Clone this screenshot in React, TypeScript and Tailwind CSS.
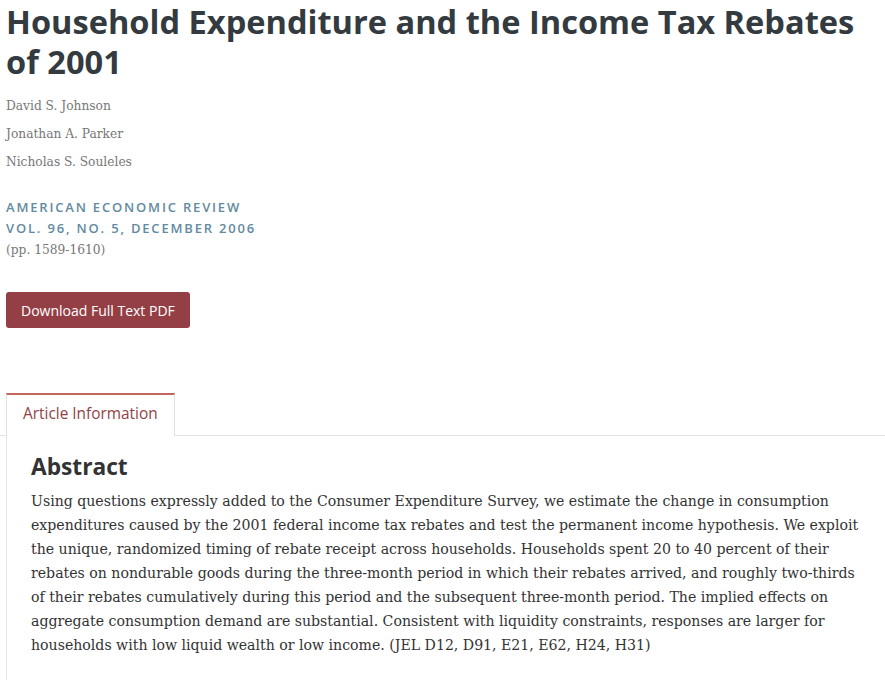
const serif = "font-['DejaVu_Serif_Condensed',serif]"
const sans = "font-['Open_Sans',sans-serif]"

const authors = ['David S. Johnson', 'Jonathan A. Parker', 'Nicholas S. Souleles']

const abstract =
  'Using questions expressly added to the Consumer Expenditure Survey, we estimate the change in consumption expenditures caused by the 2001 federal income tax rebates and test the permanent income hypothesis. We exploit the unique, randomized timing of rebate receipt across households. Households spent 20 to 40 percent of their rebates on nondurable goods during the three-month period in which their rebates arrived, and roughly two-thirds of their rebates cumulatively during this period and the subsequent three-month period. The implied effects on aggregate consumption demand are substantial. Consistent with liquidity constraints, responses are larger for households with low liquid wealth or low income. (JEL D12, D91, E21, E62, H24, H31)'

const App = () => {
  return (
    <div className="h-[680px] w-[885px] overflow-hidden bg-white">
      <div className="pl-[6px]">
        <h1 className={`${sans} pt-[2px] text-[32.6px] font-bold leading-[40px] text-[#333a40]`}>
          Household Expenditure and the Income Tax Rebates of 2001
        </h1>

        {/* authors */}
        <ul className={`${serif} mt-[9px] text-[13.6px] text-[#777]`}>
          {authors.map((a) => (
            <li key={a} className="h-[28px] leading-[28px]">
              {a}
            </li>
          ))}
        </ul>

        {/* journal */}
        <div className="mt-[22px]">
          <div className={`${sans} text-[13px] font-semibold uppercase leading-[21px] tracking-[0.14em] text-[#628aa0]`}>
            American Economic Review
          </div>
          <div className={`${sans} text-[13px] font-semibold uppercase leading-[21px] tracking-[0.14em] text-[#628aa0]`}>
            Vol. 96, No. 5, December 2006
          </div>
          <div className={`${serif} text-[13.6px] leading-[20px] text-[#777]`}>(pp. 1589-1610)</div>
        </div>

        <button
          className={`${sans} mt-[33px] h-[36px] rounded-[3px] bg-[#943f46] px-[15px] text-[14px] text-white`}
        >
          Download Full Text PDF
        </button>
      </div>

      {/* tabs */}
      <div className="mt-[65px] flex">
        <div className="w-[6px] border-b border-[#e5e5e5]" />
        <div className="h-[43px] border-x border-t-2 border-x-[#e0e0e0] border-t-[#c2675c] px-[16px] pt-[6px]">
          <span className={`${sans} text-[15.4px] text-[#943f46]`}>Article Information</span>
        </div>
        <div className="flex-1 border-b border-[#e5e5e5]" />
      </div>

      {/* panel */}
      <div className="ml-[6px] border-l border-[#e5e5e5] pl-[24px] pr-[20px] pt-[17px] pb-[40px]">
        <h2 className={`${sans} text-[22.7px] font-bold leading-[28px] text-[#333]`}>Abstract</h2>
        <p className={`${serif} mt-[8px] text-[15.7px] leading-[24px] text-[#333]`}>{abstract}</p>
      </div>
    </div>
  )
}

export default App
